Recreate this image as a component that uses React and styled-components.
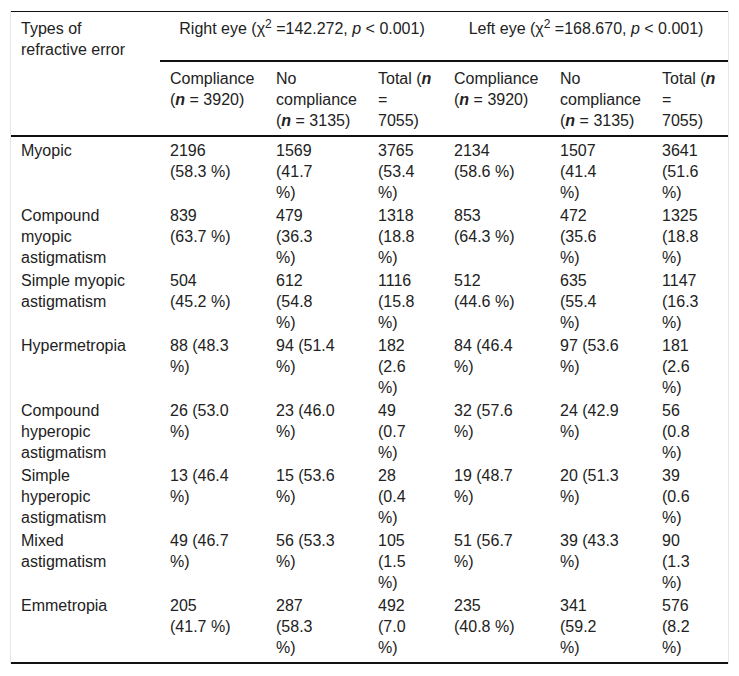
import React from "react";
import styled, { createGlobalStyle } from "styled-components";

const GlobalStyle = createGlobalStyle`
  body {
    margin: 0;
    background: #fff;
    font-family: "Liberation Sans", Arial, sans-serif;
    color: #222;
  }
`;

const Wrapper = styled.div`
  margin: 11px 0 0 10px;
  width: 717px;
  border-left: 1px solid #e6e6e6;
  border-right: 1px solid #e6e6e6;
`;

const Table = styled.table`
  width: 717px;
  table-layout: fixed;
  border-collapse: collapse;
  border-top: 1px solid #111;
  border-bottom: 2px solid #111;
  font-size: 16px;
  line-height: 21px;
`;

const HeadCell = styled.th`
  font-weight: normal;
  text-align: ${(p) => (p.$center ? "center" : "left")};
  vertical-align: top;
  padding: ${(p) => (p.$second ? "6px 10px 4px" : "6px 10px 1px")};
  white-space: nowrap;
  border-bottom: ${(p) => (p.$rule ? "2px solid #111" : "none")};
`;

const Sup = styled.sup`
  line-height: 0;
  font-size: 12px;
`;

const Cell = styled.td`
  vertical-align: top;
  padding: 2px 10px 0;
  white-space: nowrap;
`;

const BodyRow = styled.tr`
  &:first-child ${Cell} {
    padding-top: 3px;
  }
  &:last-child ${Cell} {
    padding-bottom: 4px;
  }
`;

const N = () => (
  <b>
    <i>n</i>
  </b>
);

const Lines = ({ lines }) =>
  lines.map((l, i) => (
    <React.Fragment key={i}>
      {i > 0 && <br />}
      {l}
    </React.Fragment>
  ));

const widths = [149, 106, 102, 76, 106, 102, 76];

const subHeads = [
  ["Compliance", <>(<N /> = 3920)</>],
  ["No", "compliance", <>(<N /> = 3135)</>],
  [<>Total (<N /></>, "=", "7055)"],
];

const rows = [
  [["Myopic"], ["2196", "(58.3 %)"], ["1569", "(41.7", "%)"], ["3765", "(53.4", "%)"], ["2134", "(58.6 %)"], ["1507", "(41.4", "%)"], ["3641", "(51.6", "%)"]],
  [["Compound", "myopic", "astigmatism"], ["839", "(63.7 %)"], ["479", "(36.3", "%)"], ["1318", "(18.8", "%)"], ["853", "(64.3 %)"], ["472", "(35.6", "%)"], ["1325", "(18.8", "%)"]],
  [["Simple myopic", "astigmatism"], ["504", "(45.2 %)"], ["612", "(54.8", "%)"], ["1116", "(15.8", "%)"], ["512", "(44.6 %)"], ["635", "(55.4", "%)"], ["1147", "(16.3", "%)"]],
  [["Hypermetropia"], ["88 (48.3", "%)"], ["94 (51.4", "%)"], ["182", "(2.6", "%)"], ["84 (46.4", "%)"], ["97 (53.6", "%)"], ["181", "(2.6", "%)"]],
  [["Compound", "hyperopic", "astigmatism"], ["26 (53.0", "%)"], ["23 (46.0", "%)"], ["49", "(0.7", "%)"], ["32 (57.6", "%)"], ["24 (42.9", "%)"], ["56", "(0.8", "%)"]],
  [["Simple", "hyperopic", "astigmatism"], ["13 (46.4", "%)"], ["15 (53.6", "%)"], ["28", "(0.4", "%)"], ["19 (48.7", "%)"], ["20 (51.3", "%)"], ["39", "(0.6", "%)"]],
  [["Mixed", "astigmatism"], ["49 (46.7", "%)"], ["56 (53.3", "%)"], ["105", "(1.5", "%)"], ["51 (56.7", "%)"], ["39 (43.3", "%)"], ["90", "(1.3", "%)"]],
  [["Emmetropia"], ["205", "(41.7 %)"], ["287", "(58.3", "%)"], ["492", "(7.0", "%)"], ["235", "(40.8 %)"], ["341", "(59.2", "%)"], ["576", "(8.2", "%)"]],
];

export default function App() {
  return (
    <>
      <GlobalStyle />
      <Wrapper>
        <Table>
          <colgroup>
            {widths.map((w, i) => (
              <col key={i} style={{ width: w }} />
            ))}
          </colgroup>
          <thead>
            <tr>
              <HeadCell>
                <Lines lines={["Types of", "refractive error"]} />
              </HeadCell>
              <HeadCell colSpan={3} $center $rule>
                Right eye (χ<Sup>2</Sup> =142.272, <i>p</i> &lt; 0.001)
              </HeadCell>
              <HeadCell colSpan={3} $center $rule>
                Left eye (χ<Sup>2</Sup> =168.670, <i>p</i> &lt; 0.001)
              </HeadCell>
            </tr>
            <tr>
              <HeadCell $second $rule />
              {[...subHeads, ...subHeads].map((lines, i) => (
                <HeadCell key={i} $second $rule>
                  <Lines lines={lines} />
                </HeadCell>
              ))}
            </tr>
          </thead>
          <tbody>
            {rows.map((row, r) => (
              <BodyRow key={r}>
                {row.map((lines, c) => (
                  <Cell key={c}>
                    <Lines lines={lines} />
                  </Cell>
                ))}
              </BodyRow>
            ))}
          </tbody>
        </Table>
      </Wrapper>
    </>
  );
}
